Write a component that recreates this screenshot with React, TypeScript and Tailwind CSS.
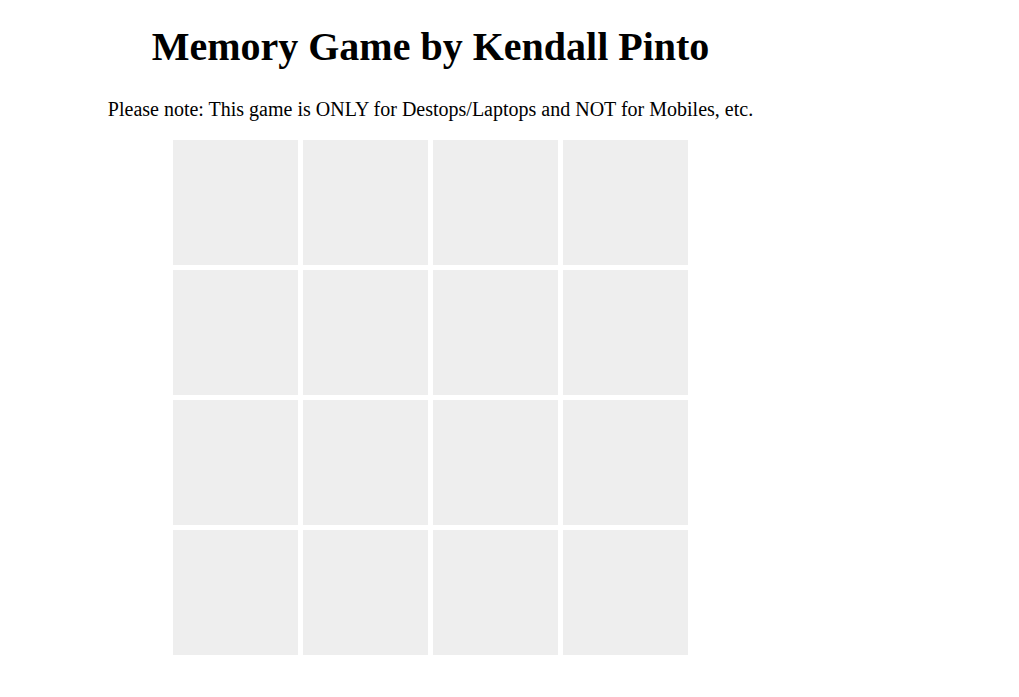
export default function App() {
  const tiles = Array.from({ length: 16 });
  return (
    <div className="w-[861px] pt-[22px] text-center text-black" style={{ fontFamily: '"Liberation Serif", "Times New Roman", serif' }}>
      <h1 className="text-[40px] font-bold leading-[50px]">Memory Game by Kendall Pinto</h1>
      <p className="mt-[25px] text-[20px] leading-[24px]">Please note: This game is ONLY for Destops/Laptops and NOT for Mobiles, etc.</p>
      <div className="mx-auto mt-[19px] grid w-[515px] grid-cols-4 gap-[5px]">
        {tiles.map((_, i) => (
          <div key={i} className="h-[125px] w-[125px] bg-[#eeeeee]" />
        ))}
      </div>
    </div>
  );
}
